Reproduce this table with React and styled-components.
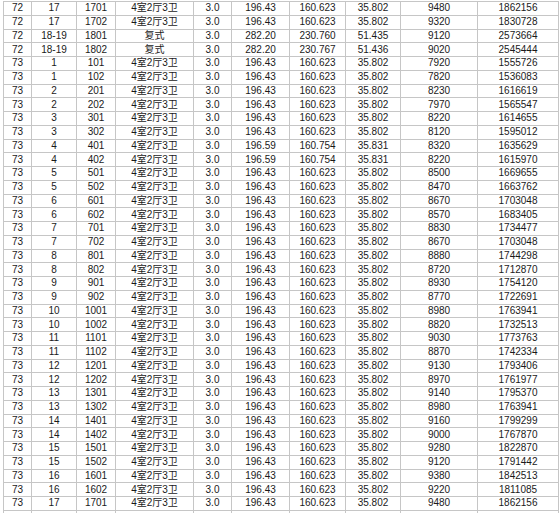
import React from "react";
import styled, { createGlobalStyle } from "styled-components";

const GlobalStyle = createGlobalStyle`
  html, body {
    margin: 0;
    padding: 0;
    background: #ffffff;
    overflow: hidden;
  }
`;

const cols = [28, 45, 39, 78, 38, 58, 56, 55, 77, 81];

const Page = styled.div`
  height: 513px;
  overflow: hidden;
  padding: 1px 0 0 3px;
  box-sizing: border-box;
  font-family: "Liberation Sans", Arial, "Noto Sans CJK SC", sans-serif;
  font-size: 10px;
  color: #1a1a1a;
`;

const Table = styled.div`
  display: inline-block;
  border-top: 1px solid #c6c6c6;
  border-left: 1px solid #c6c6c6;
`;

const Row = styled.div`
  display: grid;
  grid-template-columns: ${cols.map(c => c + "px").join(" ")};
  height: 13.75px;
`;

const Cell = styled.div`
  display: flex;
  align-items: center;
  justify-content: center;
  box-sizing: border-box;
  border-right: 1px solid #c6c6c6;
  border-bottom: 1px solid #c6c6c6;
  white-space: nowrap;
  overflow: hidden;
  line-height: 12px;
`;

const std = ["4室2厅3卫", "3.0", "196.43", "160.623", "35.802"];

const rows = [
  ["72", "17", "1701", ...std, "9480", "1862156"],
  ["72", "17", "1702", ...std, "9320", "1830728"],
  ["72", "18-19", "1801", "复式", "3.0", "282.20", "230.760", "51.435", "9120", "2573664"],
  ["72", "18-19", "1802", "复式", "3.0", "282.20", "230.767", "51.436", "9020", "2545444"],
  ["73", "1", "101", ...std, "7920", "1555726"],
  ["73", "1", "102", ...std, "7820", "1536083"],
  ["73", "2", "201", ...std, "8230", "1616619"],
  ["73", "2", "202", ...std, "7970", "1565547"],
  ["73", "3", "301", ...std, "8220", "1614655"],
  ["73", "3", "302", ...std, "8120", "1595012"],
  ["73", "4", "401", "4室2厅3卫", "3.0", "196.59", "160.754", "35.831", "8320", "1635629"],
  ["73", "4", "402", "4室2厅3卫", "3.0", "196.59", "160.754", "35.831", "8220", "1615970"],
  ["73", "5", "501", ...std, "8500", "1669655"],
  ["73", "5", "502", ...std, "8470", "1663762"],
  ["73", "6", "601", ...std, "8670", "1703048"],
  ["73", "6", "602", ...std, "8570", "1683405"],
  ["73", "7", "701", ...std, "8830", "1734477"],
  ["73", "7", "702", ...std, "8670", "1703048"],
  ["73", "8", "801", ...std, "8880", "1744298"],
  ["73", "8", "802", ...std, "8720", "1712870"],
  ["73", "9", "901", ...std, "8930", "1754120"],
  ["73", "9", "902", ...std, "8770", "1722691"],
  ["73", "10", "1001", ...std, "8980", "1763941"],
  ["73", "10", "1002", ...std, "8820", "1732513"],
  ["73", "11", "1101", ...std, "9030", "1773763"],
  ["73", "11", "1102", ...std, "8870", "1742334"],
  ["73", "12", "1201", ...std, "9130", "1793406"],
  ["73", "12", "1202", ...std, "8970", "1761977"],
  ["73", "13", "1301", ...std, "9140", "1795370"],
  ["73", "13", "1302", ...std, "8980", "1763941"],
  ["73", "14", "1401", ...std, "9160", "1799299"],
  ["73", "14", "1402", ...std, "9000", "1767870"],
  ["73", "15", "1501", ...std, "9280", "1822870"],
  ["73", "15", "1502", ...std, "9120", "1791442"],
  ["73", "16", "1601", ...std, "9380", "1842513"],
  ["73", "16", "1602", ...std, "9220", "1811085"],
  ["73", "17", "1701", ...std, "9480", "1862156"],
  // next row is only a sliver at the bottom edge
  ["", "", "", "", "", "", "", "", "", ""],
];

const App = () => {
  return (
    <Page>
      <GlobalStyle />
      <Table>
        {rows.map((r, i) => (
          <Row key={i}>
            {r.map((v, j) => (
              <Cell key={j}>{v}</Cell>
            ))}
          </Row>
        ))}
      </Table>
    </Page>
  );
};

export default App;
